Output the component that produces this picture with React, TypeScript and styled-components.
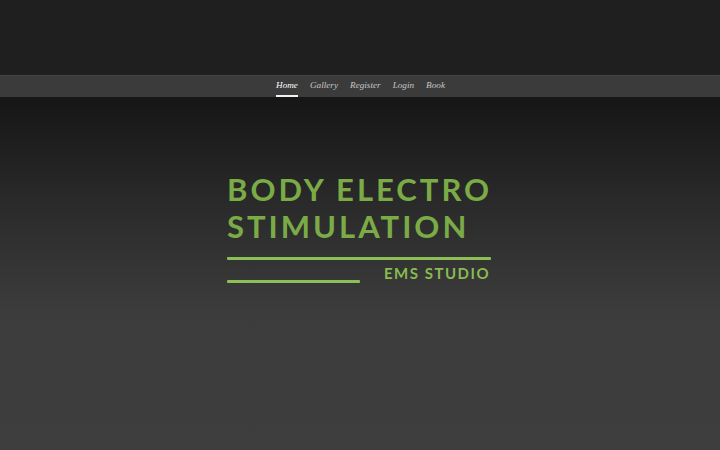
import React from 'react';
import styled, { createGlobalStyle } from 'styled-components';

const GlobalStyle = createGlobalStyle`
  html, body {
    margin: 0;
    padding: 0;
    height: 100%;
    background: #1f1f1f;
  }
  #root {
    min-height: 100%;
  }
`;

const Page = styled.div`
  display: flex;
  flex-direction: column;
  height: 450px;
  width: 100%;
  overflow: hidden;
`;

const TopBand = styled.div`
  height: 75px;
  background: #1f1f1f;
  flex-shrink: 0;
`;

const NavBar = styled.nav`
  height: 22px;
  background: #3b3b3b;
  border-top: 1px solid #454545;
  box-sizing: border-box;
  display: flex;
  justify-content: center;
  align-items: stretch;
  gap: 12px;
  flex-shrink: 0;
  padding-left: 1px;
`;

const NavLink = styled.a<{ active?: boolean }>`
  position: relative;
  display: flex;
  align-items: center;
  font-family: 'Liberation Serif', 'DejaVu Serif', serif;
  font-style: italic;
  font-size: 9.2px;
  color: ${({ active }) => (active ? '#ffffff' : '#c8c8c8')};
  text-decoration: none;
  padding-bottom: 3px;

  &::after {
    content: '';
    display: ${({ active }) => (active ? 'block' : 'none')};
    position: absolute;
    left: 0;
    right: 0;
    bottom: 0;
    height: 2px;
    background: #f2f2f2;
  }
`;

const Hero = styled.main`
  flex: 1;
  background: linear-gradient(180deg, #161616 0%, #2a2a2a 30%, #3c3c3c 61%, #3e3e3e 100%);
  display: flex;
  justify-content: center;
  padding-top: 74px;
`;

const Logo = styled.div`
  width: 264px;
  display: flex;
  flex-direction: column;
  margin-right: 2px;
`;

const Title = styled.h1`
  margin: 0;
  font-family: Lato, 'Open Sans', sans-serif;
  font-weight: 700;
  font-size: 31px;
  line-height: 37px;
  letter-spacing: 3px;
  color: #7aab46;
  white-space: nowrap;
`;

const Rule = styled.div<{ w: number }>`
  width: ${({ w }) => w}px;
  height: 3px;
  background: #8cbf55;
  border-radius: 1px;
`;

const SubRow = styled.div`
  display: flex;
  justify-content: flex-end;
  margin-top: 7px;
  padding-right: 1px;
`;

const Sub = styled.span`
  font-family: Lato, 'Open Sans', sans-serif;
  font-weight: 700;
  font-size: 15px;
  line-height: 12px;
  letter-spacing: 1.5px;
  color: #88bb50;
`;

const Spacer = styled.div<{ h: number }>`
  height: ${({ h }) => h}px;
`;

export default function App() {
  return (
    <Page>
      <GlobalStyle />
      <TopBand />
      <NavBar>
        <NavLink active href="#">Home</NavLink>
        <NavLink href="#">Gallery</NavLink>
        <NavLink href="#">Register</NavLink>
        <NavLink href="#">Login</NavLink>
        <NavLink href="#">Book</NavLink>
      </NavBar>
      <Hero>
        <Logo>
          <Title>BODY ELECTRO<br />STIMULATION</Title>
          <Spacer h={12} />
          <Rule w={264} />
          <SubRow>
            <Sub>EMS STUDIO</Sub>
          </SubRow>
          <Spacer h={1} />
          <Rule w={133} />
        </Logo>
      </Hero>
    </Page>
  );
}
